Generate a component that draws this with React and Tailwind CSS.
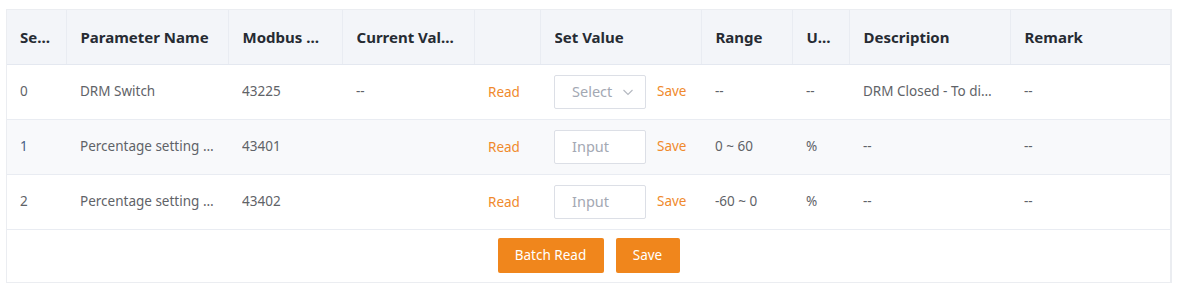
const rows = [
  {
    idx: "0",
    name: "DRM Switch",
    addr: "43225",
    current: "--",
    control: "select",
    range: "--",
    unit: "--",
    desc: "DRM Closed - To disable DRM function",
    remark: "--",
  },
  {
    idx: "1",
    name: "Percentage setting of active power",
    addr: "43401",
    current: "",
    control: "input",
    range: "0 ~ 60",
    unit: "%",
    desc: "--",
    remark: "--",
  },
  {
    idx: "2",
    name: "Percentage setting of reactive power",
    addr: "43402",
    current: "",
    control: "input",
    range: "-60 ~ 0",
    unit: "%",
    desc: "--",
    remark: "--",
  },
];

const cols = [
  { label: "Serial No.", w: "w-[59px]" },
  { label: "Parameter Name", w: "w-[162px]" },
  { label: "Modbus Address", w: "w-[114px]" },
  { label: "Current Value", w: "w-[132px]" },
  { label: "", w: "w-[66px]" },
  { label: "Set Value", w: "w-[161px]" },
  { label: "Range", w: "w-[91px]" },
  { label: "Unit", w: "w-[57px]" },
  { label: "Description", w: "w-[161px]" },
  { label: "Remark", w: "" },
];

const Chevron = () => (
  <svg width="12" height="12" viewBox="0 0 12 12" className="text-[#b4b8c0]">
    <polyline
      points="1.5,4 6,8.5 10.5,4"
      fill="none"
      stroke="currentColor"
      strokeWidth="1.1"
    />
  </svg>
);

const Cell = ({ children, className = "" }) => (
  <td className={`h-[55px] px-[14px] border-b border-[#e9ecf2] ${className}`}>
    <div className="truncate">{children}</div>
  </td>
);

export default function App() {
  return (
    <div
      className="bg-white w-[1182px] h-[289px] pt-[9px] pl-[6px]"
      style={{ fontFamily: '"Noto Sans", "Open Sans", sans-serif' }}
    >
      <div className="w-[1166px] border border-[#ebedf1] border-r-2 bg-white">
        <table className="w-full table-fixed border-collapse text-[13.5px] text-[#5f6368]">
          <colgroup>
            {cols.map((c, i) => (
              <col key={i} className={c.w} />
            ))}
          </colgroup>
          <thead>
            <tr className="bg-[#f3f5f9]">
              {cols.map((c, i) => (
                <th
                  key={i}
                  className={`h-[54px] text-left text-[15px] font-bold text-[#262b33] border-b border-[#e4e8f0] ${
                    i === 0 ? "pl-[13px] pr-[12px]" : "px-[14px]"
                  } ${i < cols.length - 1 ? "border-r border-r-[#e9ecf2]" : ""}`}
                >
                  <div className="truncate">{c.label}</div>
                </th>
              ))}
            </tr>
          </thead>
          <tbody>
            {rows.map((r, i) => (
              <tr key={r.idx} className={i === 1 ? "bg-[#f8f9fb]" : "bg-white"}>
                <Cell className={`!pl-[13px] ${i === 1 ? "text-[#4a5f86]" : ""}`}>
                  {r.idx}
                </Cell>
                <Cell>{r.name}</Cell>
                <Cell>{r.addr}</Cell>
                <Cell>{r.current}</Cell>
                <Cell>
                  <span className="text-[#f08a2c] relative top-[1px]">Read</span>
                </Cell>
                <td className="h-[55px] px-[14px] border-b border-[#e9ecf2]">
                  <div className="flex items-center gap-[11px]">
                    {r.control === "select" ? (
                      <div className="w-[92px] h-[34px] border border-[#dcdfe6] rounded-[2px] bg-white flex items-center pl-[17px] pr-[11px] justify-between text-[14.5px] text-[#a3a8b3]">
                        <span>Select</span>
                        <Chevron />
                      </div>
                    ) : (
                      <div className="w-[92px] h-[34px] border border-[#dcdfe6] rounded-[2px] bg-white flex items-center pl-[17px] text-[14.5px] text-[#a3a8b3]">
                        Input
                      </div>
                    )}
                    <span className="text-[#f08a2c]">Save</span>
                  </div>
                </td>
                <Cell>{r.range}</Cell>
                <Cell>{r.unit}</Cell>
                <Cell>{r.desc}</Cell>
                <Cell>{r.remark}</Cell>
              </tr>
            ))}
          </tbody>
        </table>
        <div className="h-[52px] flex items-start justify-center gap-[12px] pt-[8px]">
          <button className="h-[35px] w-[106px] rounded-[2px] bg-[#f0861c] text-white text-[13.5px]">
            Batch Read
          </button>
          <button className="h-[35px] w-[64px] rounded-[2px] bg-[#f0861c] text-white text-[13.5px]">
            Save
          </button>
        </div>
      </div>
    </div>
  );
}
